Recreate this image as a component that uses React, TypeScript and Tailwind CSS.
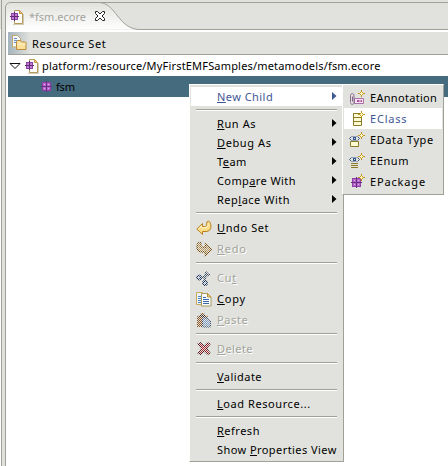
import type { ReactNode } from "react";

const PackageMark = () => (
  <g shapeRendering="crispEdges">
    <path d="M1 1h9v9H1z" fill="#8f3fa8" />
    <path d="M2 2h3v3H2zM6 2h3v3H6zM2 6h3v3H2zM6 6h3v3H6z" fill="#b766cb" />
    <path d="M3 3h1v1H3zM7 3h1v1H7zM3 7h1v1H3zM7 7h1v1H7z" fill="#dcaee8" />
    <path d="M5 0h1v11H5zM0 5h11v1H0z" fill="#6d2f86" />
  </g>
);

const Spark = () => (
  <g transform="translate(9 0)" shapeRendering="crispEdges">
    <path d="M3 0h1v2h1v1h2v1H5v1H4v2H3V5H2V4H0V3h2V2h1z" fill="#b98a14" />
    <path d="M2 2h1v1H2zM4 2h1v1H4zM2 4h1v1H2zM4 4h1v1H4zM3 1h1v1H3zM3 5h1v1H3zM1 3h1v1H1zM5 3h1v1H5z" fill="#c99c24" />
    <path d="M3 2h1v1h1v1H4v1H3V4H2V3h1z" fill="#fff6c4" />
  </g>
);

const Icon = ({ children, className = "" }: { children: ReactNode; className?: string }) => (
  <svg width="16" height="16" viewBox="0 0 16 16" className={`block shrink-0 ${className}`}>
    {children}
  </svg>
);

const FileIcon = ({ className = "" }: { className?: string }) => (
  <Icon className={className}>
    <path d="M4.5 1.500h5l3 3v10h-8z" fill="#fdfcf8" stroke="#b59a5c" />
    <path d="M9.500 1.500v3h3z" fill="#f0cd80" stroke="#c79a4a" />
    <path d="M3 15.500h11M13.500 5v10" stroke="#b5ab8a" opacity=".6" />
    <g shapeRendering="crispEdges" transform="translate(0 3)">
      <path d="M1 1h7v7H1z" fill="#8f3fa8" />
      <path d="M2 2h2v2H2zM5 2h2v2H5zM2 5h2v2H2zM5 5h2v2H5z" fill="#c07bd2" />
      <path d="M4 0h1v9H4zM0 4h9v1H0z" fill="#5f2a78" />
    </g>
  </Icon>
);

const Dither = () => (
  <>
    <defs>
      <pattern id="dither" width="2" height="2" patternUnits="userSpaceOnUse">
        <path d="M0 0h1v1H0zM1 1h1v1H1z" fill="#e1e2dd" shapeRendering="crispEdges" />
      </pattern>
    </defs>
    <rect width="16" height="16" fill="url(#dither)" />
  </>
);

const UndoIcon = () => (
  <Icon>
    <path d="M.8 9L6.500 3.500v3h2.300c1.500 0 2.400-1.500 2-4.500l2-.8c1.500 1 2.200 2.700 2.200 5.300 0 3.300-2.200 5-5 5H6.500v3z" fill="#fbdc85" stroke="#b9801f" />
    <path d="M2.300 9l3.200-3v1.700h4c2 0 3-1.700 2.500-4.500" fill="none" stroke="#fff6cf" />
  </Icon>
);
const RedoIcon = () => (
  <Icon>
    <path d="M15.200 8.500L9.500 3v3.200H6.700C5.200 6.200 4.500 5 5 1.500c-2.500-.5-4 1-4 4.500C1 9.500 3.200 11 6 11h3.500v3.500z" fill="#b99a60" stroke="#7d4c0c" strokeWidth="1.400" />
    <Dither />
  </Icon>
);
const CutIcon = () => (
  <Icon>
    <path d="M10.500 1.500L8.500 10M14 4L5 8" stroke="#44536c" strokeWidth="2.400" />
    <circle cx="3" cy="7.500" r="2" fill="none" stroke="#12305f" strokeWidth="1.800" />
    <circle cx="9" cy="13" r="2" fill="none" stroke="#12305f" strokeWidth="1.800" />
    <Dither />
  </Icon>
);
const CopyIcon = () => (
  <Icon>
    <path d="M.5 1.500h6l3 3v9h-9z" fill="#eaf3fb" stroke="#c9a955" />
    <path d="M2 5.500h3M2 7.500h3M2 9.500h3M2 11.500h3" stroke="#5684bd" />
    <path d="M5.500 2.500h6l3.500 3.500v9H5.500z" fill="#f7fbff" stroke="#a69a5c" />
    <path d="M11.500 2.500v3.500H15z" fill="#f3d792" stroke="#b99035" />
    <path d="M7 6.500h3M7 8.500h6M7 10.500h6M7 12.500h6" stroke="#3c68aa" />
  </Icon>
);
const PasteIcon = () => (
  <Icon>
    <path d="M1 4.500L4 3l1-2h3l1 2 3 1.500V15H1z" fill="#8a5220" />
    <path d="M3.500 3h6v2h-6z" fill="#333" />
    <path d="M6.500 6h5l3 3v6h-8z" fill="#7d9cc4" stroke="#384a66" />
    <Dither />
  </Icon>
);
const DeleteIcon = () => (
  <Icon>
    <path d="M2 3L4.500 1.800 8 5.500l3.500-3.700L14 3l-3.500 4.500L14 12l-2.500 1.500L8 9.800l-3.500 3.700L2 12l3.500-4.500z" fill="#b0202e" stroke="#4e1219" strokeWidth="1.200" />
    <Dither />
  </Icon>
);

const AnnotationIcon = () => (
  <Icon>
    <g fill="none" stroke="#85698c">
      <path d="M5.500 8.500h9v5h-9z" fill="#f6e2f2" stroke="#a873a8" />
      <path d="M1.500 12V5.500c0-2.500 3.500-2.500 3.500 0v7c0 2.500-3.500 2.500-3.500 0M3.500 6.500v5" />
    </g>
    <path d="M8 10h2v2H8zM12 10h1v2h-1zM10 10.500h2v1h-2z" fill="#b050a0" />
    <Spark />
  </Icon>
);
const ClassIcon = () => (
  <Icon>
    <path d="M4.500 2.500h8v12h-8z" fill="#fffbd2" stroke="#8b7a28" />
    <path d="M4 6.500h9M4 10.500h9" stroke="#8b7a28" />
    <Spark />
  </Icon>
);
const Eyes = () => (
  <g fill="none" stroke="#3b5585">
    <path d="M2.500 4.500L.5 6.500l2 2M8.500 4.500l2 2-2 2" />
    <path d="M3 4.500h5M3 8.500h5" opacity=".45" />
    <path d="M4 5h3v3H4z" fill="#34548c" stroke="none" />
    <path d="M5 6h1v1H5z" fill="#cfe0f5" stroke="none" />
  </g>
);
const DataTypeIcon = () => (
  <Icon>
    <path d="M1.500 9.500h8v5h-8z" fill="#fffbd2" stroke="#8b7a28" />
    <Eyes />
    <Spark />
  </Icon>
);
const EnumIcon = () => (
  <Icon>
    <path d="M2 10.500h7M2 12.500h7M2 14.500h7" stroke="#8b7a28" />
    <Eyes />
    <Spark />
  </Icon>
);
const PackageIcon = () => (
  <Icon>
    <g transform="translate(2 3)"><PackageMark /></g>
    <Spark />
  </Icon>
);

type ItemProps = {
  children: ReactNode;
  icon?: ReactNode;
  arrow?: boolean;
  active?: boolean;
  disabled?: boolean;
  tracking?: string;
};

const Item = ({ children, icon, arrow, active, disabled, tracking = "tracking-[0.45px]" }: ItemProps) => (
  <div
    className={`flex items-center pl-[5px] ${icon ? "h-[21px]" : "h-[19px]"} ${active ? "bg-white text-[#3f5796]" : disabled ? "text-[#a3a49c] [text-shadow:1px_1px_0_#fff]" : "text-black"}`}
  >
    <span className="mr-[5px] w-4 shrink-0">{icon}</span>
    <span className={`whitespace-nowrap ${tracking}`}>{children}</span>
    {arrow && (
      <svg width="5" height="8" className="mr-[5px] ml-auto shrink-0 -translate-y-px">
        <path d="M0 0l4.500 4L0 8z" fill="currentColor" />
      </svg>
    )}
  </div>
);

const U = ({ children }: { children: ReactNode }) => (
  <span className="underline decoration-1 underline-offset-[1px] [text-decoration-skip-ink:none]">{children}</span>
);

const Separator = () => (
  <div className="h-2 pt-[3px] pr-[5px] pl-[5px]">
    <div className="h-[2px] border-t border-b border-t-[#a0a196] border-b-white" />
  </div>
);

export default function App() {
  return (
    <div className="relative flex h-[466px] w-[448px] overflow-hidden bg-white font-['Noto_Sans',sans-serif] text-[11px] leading-[15px] text-black">
      <div className="flex w-[5px] shrink-0 flex-col bg-[#e1e2dd]">
        <div className="h-[29px] w-[2px] border-r border-[#a0a196]" />
        <div className="w-[2px] flex-1 border-r border-[#a0a196] bg-white" />
      </div>
      <main className="flex min-w-0 flex-1 flex-col">
        <div className="relative h-[30px] bg-[#e1e2dd]">
          <svg width="443" height="30" className="absolute inset-0">
            <defs>
              <linearGradient id="tab" x1="0" y1="0" x2="0" y2="1">
                <stop offset="0" stopColor="#e1e2dd" />
                <stop offset="1" stopColor="#fff" />
              </linearGradient>
            </defs>
            <path d="M.5 30V8Q.5 2.500 6 2.500H94C111 2.500 113 29.500 135 29.500z" fill="url(#tab)" />
            <path d="M.5 30V8Q.5 2.500 6 2.500H443M94 2.500C111 2.500 113 29.500 135 29.500H443" fill="none" stroke="#a0a196" />
          </svg>
          <div className="relative flex h-[30px] items-center pt-[3px] pl-[5px]">
            <FileIcon />
            <span className="ml-[3px] w-[65px] text-[#a3a49c]">*fsm.ecore</span>
            <svg width="12" height="12" viewBox="0 0 12 12" className="-mt-[1px]">
              <path d="M1.500 1.500h2L6 4l2.500-2.500h2v2L8 6l2.500 2.500v2h-2L6 8l-2.500 2.500h-2v-2L4 6 1.500 3.500z" fill="#fff" stroke="#222" />
            </svg>
          </div>
        </div>
        <div className="flex flex-1 flex-col border-l border-[#a0a196] pt-[2px] pl-[2px]">
          <div className="flex h-[23px] items-center border-b border-[#a0a196] bg-[#e1e2dd]">
            <div className="flex h-full w-[22px] items-center bg-linear-to-r from-[#a4b3bd] to-[#e1e2dd] pl-[3px]">
              <Icon>
                <path d="M1.500.5h5l3 3v8.500h-8z" fill="#f3f8fc" stroke="#c2a868" />
                <path d="M3 3.500h3M3 5.500h4M3 7.500h2" stroke="#6c8fc0" />
                <path d="M5.500 14.500V6.500l1-1h3l1 1.500h4l.5.500v7z" fill="#fbdf9c" stroke="#c08c3c" />
                <path d="M6.500 9h8" stroke="#fff3cc" />
              </Icon>
            </div>
            <span className="ml-[2px] tracking-[0.65px]">Resource Set</span>
          </div>
          <div className="flex h-[21px] items-center">
            <svg width="12" height="8" className="ml-px">
              <path d="M1 1.500h10L6 6.500z" fill="#fff" stroke="#111" />
            </svg>
            <FileIcon className="ml-[4px]" />
            <span className="ml-px tracking-[0.18px] whitespace-nowrap">platform:/resource/MyFirstEMFSamples/metamodels/fsm.ecore</span>
          </div>
          <div className="flex h-[21px] items-center bg-[#456b7f]">
            <svg width="11" height="11" className="ml-[33px]"><PackageMark /></svg>
            <span className="ml-1 tracking-[-0.2px]">fsm</span>
          </div>
        </div>
      </main>

      <div className="absolute top-[84px] left-[189px] h-[378px] w-[155px] border border-t-white border-r-[#a0a196] border-b-[#a0a196] border-l-white bg-[#e1e2dd] px-px py-[2px]">
        <Item active arrow><U>N</U>ew Child</Item>
        <Separator />
        <Item arrow tracking="tracking-[0.6px]"><U>R</U>un As</Item>
        <Item arrow tracking="tracking-[0.6px]"><U>D</U>ebug As</Item>
        <Item arrow>T<U>e</U>am</Item>
        <Item arrow tracking="tracking-[0.4px]">Comp<U>a</U>re With</Item>
        <Item arrow tracking="tracking-[0.5px]">Rep<U>l</U>ace With</Item>
        <Separator />
        <Item icon={<UndoIcon />} tracking="tracking-[0.6px]"><U>U</U>ndo Set</Item>
        <Item icon={<RedoIcon />} disabled tracking="tracking-[0.8px]"><U>R</U>edo</Item>
        <Separator />
        <Item icon={<CutIcon />} disabled tracking="tracking-[0.7px]">Cu<U>t</U></Item>
        <Item icon={<CopyIcon />} tracking="tracking-[0.8px]"><U>C</U>opy</Item>
        <Item icon={<PasteIcon />} disabled tracking="tracking-[0.6px]"><U>P</U>aste</Item>
        <Separator />
        <Item icon={<DeleteIcon />} disabled tracking="tracking-[0.4px]"><U>D</U>elete</Item>
        <Separator />
        <Item><U>V</U>alidate</Item>
        <Separator />
        <Item tracking="tracking-[0.57px]"><U>L</U>oad Resource...</Item>
        <Separator />
        <Item tracking="tracking-[0.5px]"><U>R</U>efresh</Item>
        <Item tracking="tracking-[0.43px]">Show <U>P</U>roperties View</Item>
      </div>

      <div className="absolute top-[84px] left-[342px] h-[111px] w-[102px] border border-t-white border-r-[#a0a196] border-b-[#a0a196] border-l-white bg-[#e1e2dd] px-px py-[2px]">
        <Item icon={<AnnotationIcon />} tracking="tracking-[0.3px]">EAnnotation</Item>
        <Item icon={<ClassIcon />} active tracking="tracking-[0.8px]">EClass</Item>
        <Item icon={<DataTypeIcon />} tracking="tracking-[0.6px]">EData Type</Item>
        <Item icon={<EnumIcon />} tracking="tracking-[0.6px]">EEnum</Item>
        <Item icon={<PackageIcon />} tracking="tracking-[0.85px]">EPackage</Item>
      </div>
    </div>
  );
}
